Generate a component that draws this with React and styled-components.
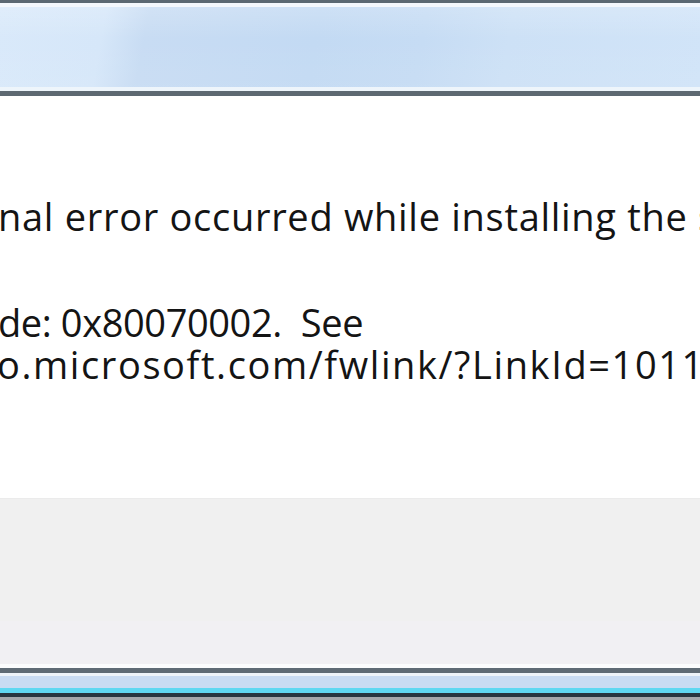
import styled, { createGlobalStyle } from "styled-components";

const GlobalStyle = createGlobalStyle`
  html, body {
    margin: 0;
    padding: 0;
    background: #ffffff;
  }
  #root {
    width: 700px;
    height: 700px;
  }
`;

const Window = styled.div`
  width: 700px;
  height: 700px;
  display: flex;
  flex-direction: column;
  overflow: hidden;
  background: #ffffff;
`;

const TitleBar = styled.div`
  height: 88px;
  border-top: 3px solid #5b6872;
  border-bottom: 5px solid #5e6972;
  box-shadow: inset 0 4px 0 #f3f7fc, inset 0 -4px 0 #eef5fb;
  background:
    linear-gradient(180deg, rgba(255, 255, 255, 0.2) 0%, rgba(255, 255, 255, 0) 40%, rgba(255, 255, 255, 0.05) 100%),
    linear-gradient(100deg, #d9e9fa 0%, #d6e7f9 15%, #c8dcf3 21%, #c3daf3 45%, #c6dcf4 60%, #cde1f6 72%, #d1e4f8 100%);
`;

const Content = styled.div`
  height: 402px;
  padding-top: 99px;
  box-sizing: border-box;
  background: #ffffff;
  font-family: "Open Sans", "Noto Sans", sans-serif;
  font-size: 38px;
  line-height: 42px;
  color: #141414;
`;

const Line = styled.div`
  white-space: pre;
  margin-left: ${(p) => p.$shift || 0}px;
  margin-bottom: ${(p) => p.$gap || 0}px;
  letter-spacing: ${(p) => p.$track || 0}px;
`;

const Footer = styled.div`
  flex: 1;
  display: flex;
  flex-direction: column;
  background: #f0f0f0;
  border-top: 1px solid #ebebeb;
`;

const FooterSpacer = styled.div`
  height: 122px;
`;

const FooterBand = styled.div`
  flex: 1;
  background: #f1f0f3;
  border-bottom: 4px solid #fbfcfd;
`;

const BottomFrame = styled.div`
  height: 32px;
  display: flex;
  flex-direction: column;
`;

const FrameStripe = styled.div`
  height: ${(p) => p.$h}px;
  background: ${(p) => p.$c};
`;

export default function App() {
  return (
    <>
      <GlobalStyle />
      <Window>
        <TitleBar />
        <Content>
          <Line $shift={-2} $gap={64} $track={0.7}>nal error occurred while installing the service pack.</Line>
          <Line $shift={-2} $track={-0.4}>de: 0x80070002.  See</Line>
          <Line $shift={-3} $track={1.6}>o.microsoft.com/fwlink/?LinkId=101120</Line>
        </Content>
        <Footer>
          <FooterSpacer />
          <FooterBand />
        </Footer>
        <BottomFrame>
          <FrameStripe $h={5} $c="#5f6b75" />
          <FrameStripe $h={3} $c="#eef4fa" />
          <FrameStripe $h={12} $c="#c9dcf3" />
          <FrameStripe $h={5} $c="#5fd8f1" />
          <FrameStripe $h={4} $c="#27363f" />
          <FrameStripe $h={3} $c="#a3a8ab" />
        </BottomFrame>
      </Window>
    </>
  );
}
